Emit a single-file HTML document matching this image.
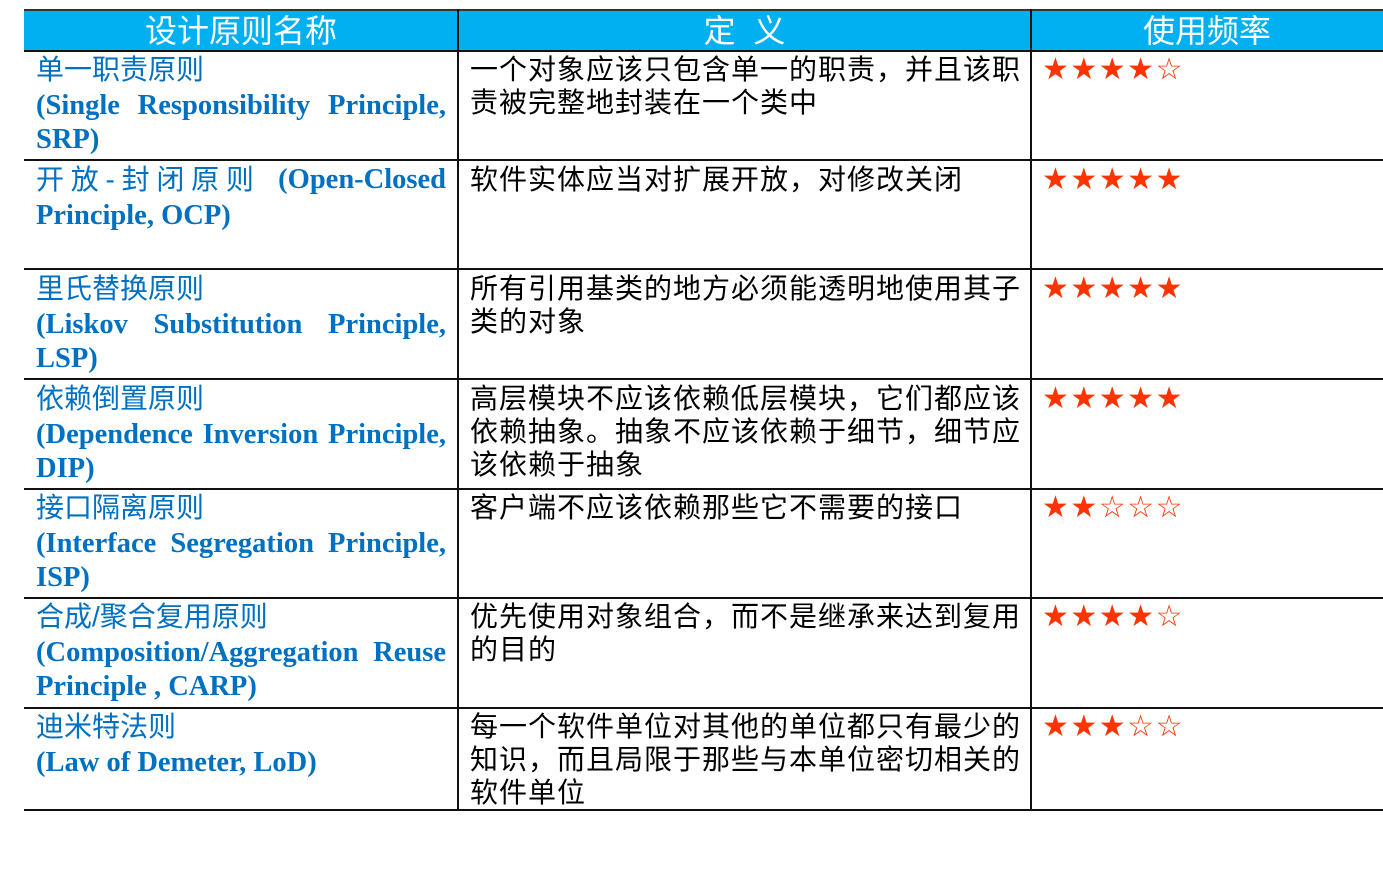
<!DOCTYPE html>
<html><head><meta charset="utf-8"><style>
body{margin:0;width:1383px;height:870px;background:#fff;position:relative;overflow:hidden;font-family:"Liberation Sans","WenQuanYi Zen Hei",sans-serif}
.hd{position:absolute;top:9px;left:24px;width:1359px;height:42px;background:#00B0F0;border-top:2px solid #333;box-sizing:border-box}
.ht{position:absolute;top:9px;height:42px;line-height:44px;color:#fff;font-size:32px;text-align:center;font-family:"Liberation Sans","Noto Sans CJK SC",sans-serif}
.h{position:absolute;left:24px;width:1359px;height:2px;background:#111}
.v{position:absolute;top:9px;width:2px;height:802px;background:#111}
.c1{position:absolute;left:36px;width:410px;color:#0070C0;font-size:28px;line-height:34px}
.c1 .l{font-family:"Liberation Serif",serif;font-weight:bold;font-size:28.5px;height:34px;line-height:38px;white-space:nowrap}
.j{text-align:justify;text-align-last:justify}
.f{display:flex;justify-content:space-between;height:34px;white-space:nowrap}
.c2{position:absolute;left:470px;width:552px;font-size:28px;line-height:33px;color:#000;letter-spacing:1px}
.c2 div{white-space:nowrap}
.c3{position:absolute;left:1042px;font-size:30px;line-height:34px;color:#FF3300;font-family:"DejaVu Sans",sans-serif;letter-spacing:1.5px}
</style></head><body>
<div class="hd"></div>
<div class="ht" style="left:24px;width:434px">设计原则名称</div>
<div class="ht" style="left:458px;width:573px">定&nbsp;&nbsp;义</div>
<div class="ht" style="left:1031px;width:352px">使用频率</div>
<div class="h" style="top:50px"></div>
<div class="h" style="top:159px"></div>
<div class="h" style="top:268px"></div>
<div class="h" style="top:378px"></div>
<div class="h" style="top:488px"></div>
<div class="h" style="top:597px"></div>
<div class="h" style="top:707px"></div>
<div class="h" style="top:809px"></div>
<div class="v" style="left:457px"></div>
<div class="v" style="left:1030px"></div>

<div class="c1" style="top:53px"><div>单一职责原则</div><div class="l j">(Single Responsibility Principle,</div><div class="l">SRP)</div></div>
<div class="c1" style="top:163px"><div class="f"><span style="width:218px;display:flex;justify-content:space-between"><span>开</span><span>放</span><span>-</span><span>封</span><span>闭</span><span>原</span><span>则</span></span><span style="font-family:'Liberation Serif',serif;font-weight:bold;font-size:28.5px">(Open-Closed</span></div><div class="l">Principle, OCP)</div></div>
<div class="c1" style="top:272px"><div>里氏替换原则</div><div class="l j">(Liskov Substitution Principle,</div><div class="l">LSP)</div></div>
<div class="c1" style="top:382px"><div>依赖倒置原则</div><div class="l j">(Dependence Inversion Principle,</div><div class="l">DIP)</div></div>
<div class="c1" style="top:491px"><div>接口隔离原则</div><div class="l j">(Interface Segregation Principle,</div><div class="l">ISP)</div></div>
<div class="c1" style="top:600px"><div>合成/聚合复用原则</div><div class="l j">(Composition/Aggregation Reuse</div><div class="l">Principle , CARP)</div></div>
<div class="c1" style="top:710px"><div>迪米特法则</div><div class="l">(Law of Demeter, LoD)</div></div>

<div class="c2" style="top:53px"><div>一个对象应该只包含单一的职责，并且该职</div><div>责被完整地封装在一个类中</div></div>
<div class="c2" style="top:163px"><div>软件实体应当对扩展开放，对修改关闭</div></div>
<div class="c2" style="top:272px"><div>所有引用基类的地方必须能透明地使用其子</div><div>类的对象</div></div>
<div class="c2" style="top:382px"><div>高层模块不应该依赖低层模块，它们都应该</div><div>依赖抽象。抽象不应该依赖于细节，细节应</div><div>该依赖于抽象</div></div>
<div class="c2" style="top:491px"><div>客户端不应该依赖那些它不需要的接口</div></div>
<div class="c2" style="top:600px"><div>优先使用对象组合，而不是继承来达到复用</div><div>的目的</div></div>
<div class="c2" style="top:710px"><div>每一个软件单位对其他的单位都只有最少的</div><div>知识，而且局限于那些与本单位密切相关的</div><div>软件单位</div></div>

<div class="c3" style="top:53px">★★★★☆</div>
<div class="c3" style="top:163px">★★★★★</div>
<div class="c3" style="top:272px">★★★★★</div>
<div class="c3" style="top:382px">★★★★★</div>
<div class="c3" style="top:491px">★★☆☆☆</div>
<div class="c3" style="top:600px">★★★★☆</div>
<div class="c3" style="top:710px">★★★☆☆</div>
</body></html>
